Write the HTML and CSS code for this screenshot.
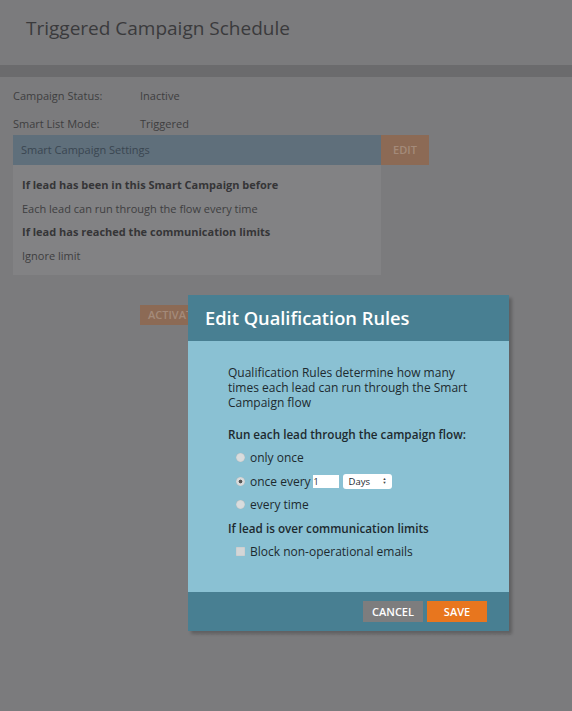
FILE: index.html
```html
<!DOCTYPE html>
<html lang="en">
<head>
    <meta charset="UTF-8">
    <title>Triggered Campaign Schedule</title>
    <link rel="stylesheet" href="styles.css">
</head>
<body>
    <!-- page header -->
    <div class="page-header">
        <h1>Triggered Campaign Schedule</h1>
    </div>
    <div class="band"></div>

    <!-- campaign info -->
    <div class="page-body">
        <div class="info-row">
            <span class="info-label">Campaign Status:</span>
            <span class="info-value">Inactive</span>
        </div>
        <div class="info-row">
            <span class="info-label">Smart List Mode:</span>
            <span class="info-value">Triggered</span>
        </div>

        <div class="settings">
            <div class="settings-bar">
                <div class="settings-title">Smart Campaign Settings</div>
                <div class="edit-btn">EDIT</div>
            </div>
            <div class="settings-box">
                <p class="strong">If lead has been in this Smart Campaign before</p>
                <p>Each lead can run through the flow every time</p>
                <p class="strong">If lead has reached the communication limits</p>
                <p>Ignore limit</p>
            </div>
        </div>

        <div class="activate-row">
            <div class="activate-btn">ACTIVATE</div>
        </div>
    </div>

    <!-- modal -->
    <div class="modal">
        <div class="modal-header">Edit Qualification Rules</div>
        <div class="modal-body">
            <p class="intro">Qualification Rules determine how many times each lead can run through the Smart Campaign flow</p>

            <div class="group-title">Run each lead through the campaign flow:</div>
            <div class="option"><span class="radio"></span>only once</div>
            <div class="option"><span class="radio checked"></span>once every <span class="num-input">1</span><span class="select">Days<span class="arrows">&#9650;<br>&#9660;</span></span></div>
            <div class="option"><span class="radio"></span>every time</div>

            <div class="group-title">If lead is over communication limits</div>
            <div class="option"><span class="check"></span>Block non-operational emails</div>
        </div>
        <div class="modal-footer">
            <div class="btn btn-cancel">CANCEL</div>
            <div class="btn btn-save">SAVE</div>
        </div>
    </div>
</body>
</html>
```
FILE: styles.css
```css
/* ====== Base ====== */
* {
    box-sizing: border-box;
    margin: 0;
    padding: 0;
}

body {
    font-family: "Open Sans", "Liberation Sans", sans-serif;
    background-color: #7b7b7d;
    color: #38383a;
    width: 572px;
    height: 711px;
    overflow: hidden;
    position: relative;
}

/* ====== Header ====== */
.page-header {
    height: 65px;
    padding: 15px 0 0 26px;
}

.page-header h1 {
    font-size: 19px;
    font-weight: 400;
    line-height: 26px;
    color: #3a3a3c;
}

.band {
    height: 12px;
    background-color: #6b6b6d;
}

/* ====== Campaign info ====== */
.page-body {
    padding: 6px 0 0 13px;
}

.info-row {
    display: flex;
    height: 24px;
    margin-bottom: 4px;
    align-items: center;
    font-size: 11px;
    color: #3e3e40;
}

.info-label {
    width: 127px;
}

.settings {
    margin-top: -4px;
    width: 416px;
}

.settings-bar {
    display: flex;
    height: 30px;
}

.settings-title {
    flex: 1;
    background-color: #5f6f7b;
    color: #3a4651;
    font-size: 11px;
    line-height: 30px;
    padding-left: 8px;
}

.edit-btn {
    width: 48px;
    background-color: #8c6a55;
    color: #a48a7a;
    font-size: 11px;
    font-weight: 600;
    text-align: center;
    line-height: 30px;
}

.settings-box {
    width: 368px;
    height: 110px;
    background-color: #828284;
    padding: 8px 0 0 9px;
    font-size: 11px;
    color: #3e3e40;
}

.settings-box p {
    line-height: 23.5px;
}

.settings-box .strong {
    font-weight: 700;
    color: #353537;
}

.activate-row {
    padding: 27px 0 0 127px;
}

.activate-btn {
    display: inline-block;
    background-color: #8c6a55;
    color: #a48a7a;
    font-size: 11px;
    font-weight: 600;
    line-height: 20px;
    padding: 0 8px;
}

/* ====== Modal ====== */
.modal {
    position: absolute;
    left: 188px;
    top: 295px;
    width: 321px;
    box-shadow: 3px 3px 3px rgba(0, 0, 0, 0.22);
}

.modal::after {
    content: '';
    position: absolute;
    left: 8px;
    right: -2px;
    bottom: -4px;
    border-bottom: 1px dashed #6e6e70;
}

.modal-header {
    height: 46px;
    background-color: #487f92;
    color: #fff;
    font-size: 18.3px;
    font-weight: 600;
    line-height: 46px;
    padding-left: 17px;
}

.modal-body {
    height: 251px;
    background-color: #8ac1d3;
    padding: 24px 36px 0 40px;
    font-size: 12px;
    color: #1d2a2f;
}

.intro {
    line-height: 15px;
    margin-bottom: 13px;
}

.group-title {
    font-size: 11.7px;
    font-weight: 600;
    line-height: 23px;
    white-space: nowrap;
}

.option {
    display: flex;
    align-items: center;
    height: 23.5px;
    padding-left: 8px;
    white-space: nowrap;
}

.radio {
    width: 9px;
    height: 9px;
    border-radius: 50%;
    background: #d9dcdd;
    margin-right: 5px;
    box-shadow: inset 0 0 1px rgba(0, 0, 0, 0.25);
}

.radio.checked {
    background: radial-gradient(circle, #555 0 1.6px, #d9dcdd 2.2px);
}

.check {
    width: 9px;
    height: 9px;
    background: #d3d6d7;
    margin-right: 5px;
    box-shadow: inset 0 0 1px rgba(0, 0, 0, 0.3);
}

.num-input {
    display: inline-block;
    width: 26px;
    height: 13px;
    background: #fff;
    margin-left: 2px;
    font-size: 9px;
    line-height: 13px;
    padding-left: 1px;
}

.select {
    display: inline-flex;
    align-items: center;
    justify-content: space-between;
    width: 49px;
    height: 15px;
    background: #fff;
    border-radius: 3px;
    margin-left: 4px;
    font-size: 9.5px;
    padding: 0 5px 0 6px;
}

.arrows {
    font-size: 4px;
    line-height: 4px;
    color: #444;
}

.modal-footer {
    height: 39px;
    background-color: #487f92;
    display: flex;
    justify-content: flex-end;
    align-items: center;
    gap: 4px;
    padding-right: 22px;
}

.btn {
    width: 60px;
    height: 21px;
    color: #fff;
    font-size: 11px;
    font-weight: 600;
    text-align: center;
    line-height: 21px;
}

.btn-cancel {
    background-color: #7d7d7e;
}

.btn-save {
    background-color: #e8761e;
}
```
